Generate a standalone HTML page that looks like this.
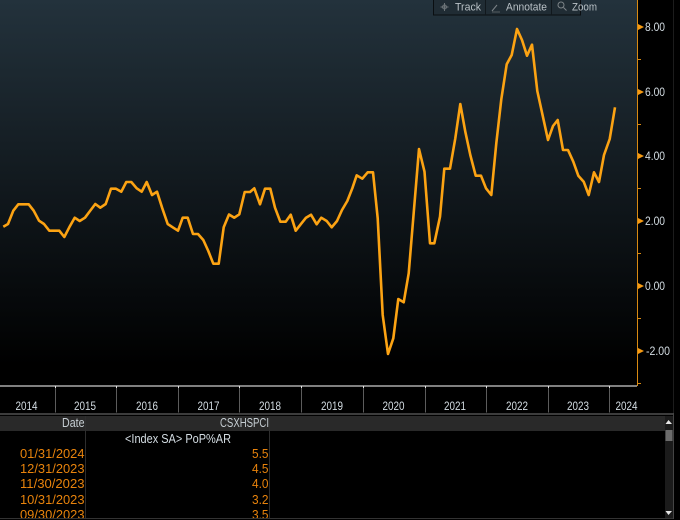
<!DOCTYPE html>
<html lang="en">
<head>
<meta charset="utf-8">
<title>CSXHSPCI chart</title>
<style>
html,body{margin:0;padding:0;background:#000;}
body{width:680px;height:520px;overflow:hidden;}
svg{display:block;}
text{font-family:"Liberation Sans",sans-serif;}
</style>
</head>
<body>
<svg width="680" height="520" viewBox="0 0 680 520" xmlns="http://www.w3.org/2000/svg">
<defs>
<linearGradient id="bg" x1="0" y1="0" x2="0" y2="1">
<stop offset="0" stop-color="#23323c"/>
<stop offset="0.95" stop-color="#000"/>
<stop offset="1" stop-color="#000"/>
</linearGradient>
</defs>
<rect width="680" height="520" fill="#000"/>
<rect x="0" y="0" width="637" height="385" fill="url(#bg)"/>

<!-- toolbar -->
<rect x="433.500" y="-2" width="147" height="17" fill="#202c34" stroke="#0a0e11"/>
<path d="M485.500 0V15M551.500 0V15" stroke="#11181d"/>
<path d="M444.500 3V11M440.500 7H448.500" stroke="#6d7478" stroke-width="1"/>
<circle cx="444.500" cy="7" r="2" fill="none" stroke="#6d7478"/>
<path d="M492 11L497 5" stroke="#7d8488"/><path d="M492 12H500" stroke="#555c60"/>
<circle cx="561" cy="5" r="3" fill="none" stroke="#7d8488"/><path d="M563.500 7.500L566.500 10.500" stroke="#7d8488"/>
<g font-size="11" fill="#b9c1c6" lengthAdjust="spacingAndGlyphs">
<text x="455" y="10.500" textLength="26" lengthAdjust="spacingAndGlyphs">Track</text>
<text x="506" y="10.500" textLength="41" lengthAdjust="spacingAndGlyphs">Annotate</text>
<text x="572" y="10.500" textLength="25" lengthAdjust="spacingAndGlyphs">Zoom</text>
</g>

<!-- series -->
<polyline fill="none" stroke="#fca313" stroke-width="2.6" stroke-linejoin="round" stroke-linecap="butt" points="3.300,226.700 8,224 13.300,210.700 18.300,204.300 23.300,204.300 28.700,204.300 33.700,210.700 39,220.700 44,224 49.300,230.700 54.300,230.700 59.300,230.700 64.300,237 69.300,227.300 74.700,217.700 79.700,221 85,217.700 90,211 95.300,204 100.300,207.700 105.700,204 111,188.700 116,188.700 121.300,191.700 126.300,182 131.300,182 136.700,188.300 141.700,191.700 146.700,182 152,195 157,191.700 162.300,208.300 167.700,224 172.700,227.300 178,230.700 182.700,217.700 187.700,217.700 193,234 198,234 203.300,240 208.300,251 213.300,263.700 218.700,263.700 223.700,227.300 229,214.500 234.300,217.700 239.300,214.300 244.700,192 250,192 254.300,188.300 260,204.300 265,188.700 270.300,188.700 275,207.700 280.300,221.700 285.700,221.700 290.700,214.700 295.700,230.700 300.700,224.300 306,217.700 311,214.700 316.700,224.300 321.300,217.700 326.700,221 331.700,227.300 337,221 342,210 347.300,201 352.300,188.300 356.700,175.300 362.300,178.700 367.700,172.300 373,172.300 377.700,218.300 382.700,315 388,354 393.300,338.300 398.300,299 403.700,302.300 408.700,273.300 413.800,211.700 419,149 424.500,171.700 430,243.300 434.300,243.300 440,216.700 444.300,168.700 450,168.700 455.300,138.300 460.300,104 465.300,131.700 470.300,155 475.700,175.700 481,175.700 486,188.300 491.300,195 496.300,143.300 501.300,99.300 506.700,64.300 511.700,55 517,29 522,40 527,55.700 532,44.700 537.300,91 542.700,115.700 548,140 553,126 557.700,120 563,150 568,150 573.300,161.700 578.300,175.700 583.700,181.700 588.700,195 594,172.300 599,182 604,155 609.700,139 615,107.300"/>

<!-- y axis -->
<path d="M637.500 0V386" stroke="#d98a12" stroke-width="1"/>
<g fill="#f59a12">
<path d="M638 24L644 27 638 30Z"/>
<path d="M638 89L644 92 638 95Z"/>
<path d="M638 153L644 156 638 159Z"/>
<path d="M638 218L644 221 638 224Z"/>
<path d="M638 283L644 286 638 289Z"/>
<path d="M638 348L644 351 638 354Z"/>
</g>
<path d="M638 59.500H641M638 124.500H641M638 188.500H641M638 253.500H641M638 318.500H641M638 383.500H641" stroke="#d98a12"/>
<g font-size="11.500" fill="#d4dde3">
<text x="645" y="31" textLength="20" lengthAdjust="spacingAndGlyphs">8.00</text>
<text x="645" y="96" textLength="20" lengthAdjust="spacingAndGlyphs">6.00</text>
<text x="645" y="160" textLength="20" lengthAdjust="spacingAndGlyphs">4.00</text>
<text x="645" y="225" textLength="20" lengthAdjust="spacingAndGlyphs">2.00</text>
<text x="645" y="290" textLength="20" lengthAdjust="spacingAndGlyphs">0.00</text>
<text x="646" y="355" textLength="24" lengthAdjust="spacingAndGlyphs">-2.00</text>
</g>

<!-- x axis -->
<rect x="0" y="385" width="637" height="2" fill="#808080"/>
<path d="M55.500 387V412.500M116.500 387V412.500M178.500 387V412.500M239.500 387V412.500M301.500 387V412.500M363.500 387V412.500M425.500 387V412.500M486.500 387V412.500M548.500 387V412.500M609.500 387V412.500" stroke="#5c5c5c"/>
<path d="M55.500 386V388M116.500 386V388M178.500 386V388M239.500 386V388M301.500 386V388M363.500 386V388M425.500 386V388M486.500 386V388M548.500 386V388M609.500 386V388" stroke="#e4e4e4"/>
<g font-size="11.500" fill="#d4dde3">
<text x="15.500" y="410" textLength="22" lengthAdjust="spacingAndGlyphs">2014</text>
<text x="74" y="410" textLength="22" lengthAdjust="spacingAndGlyphs">2015</text>
<text x="136" y="410" textLength="22" lengthAdjust="spacingAndGlyphs">2016</text>
<text x="197.500" y="410" textLength="22" lengthAdjust="spacingAndGlyphs">2017</text>
<text x="259" y="410" textLength="22" lengthAdjust="spacingAndGlyphs">2018</text>
<text x="321" y="410" textLength="22" lengthAdjust="spacingAndGlyphs">2019</text>
<text x="382.500" y="410" textLength="22" lengthAdjust="spacingAndGlyphs">2020</text>
<text x="444" y="410" textLength="22" lengthAdjust="spacingAndGlyphs">2021</text>
<text x="506" y="410" textLength="22" lengthAdjust="spacingAndGlyphs">2022</text>
<text x="567" y="410" textLength="22" lengthAdjust="spacingAndGlyphs">2023</text>
<text x="615.500" y="410" textLength="22" lengthAdjust="spacingAndGlyphs">2024</text>
</g>

<!-- table frame -->
<rect x="0" y="413" width="673" height="2" fill="#3c3c3c"/>
<rect x="0" y="416" width="665" height="15" fill="#292929"/>
<path d="M85.500 416V520M269.500 416V520" stroke="#2e2e2e"/>
<rect x="673" y="0" width="1" height="413" fill="#1c1c1c"/>
<rect x="673" y="413" width="1" height="106" fill="#444"/>

<!-- scrollbar -->
<rect x="665" y="416" width="8" height="102" fill="#1b1b1b"/>
<rect x="665.500" y="430" width="7" height="11" fill="#6c6c6c"/>
<path d="M668.500 420L665.500 424H672Z" fill="#e4e4e4"/>
<path d="M668.500 515L665.500 511H672Z" fill="#e4e4e4"/>

<!-- table text -->
<g font-size="13" fill="#c6ced3">
<text x="62" y="427" textLength="22.500" lengthAdjust="spacingAndGlyphs">Date</text>
<text x="220" y="427" textLength="49" lengthAdjust="spacingAndGlyphs">CSXHSPCI</text>
</g>
<text x="125" y="443" font-size="13" fill="#d4dde3" textLength="106" lengthAdjust="spacingAndGlyphs">&lt;Index SA&gt; PoP%AR</text>
<g font-size="13" fill="#e8830c">
<text x="20" y="458" textLength="64.500" lengthAdjust="spacingAndGlyphs">01/31/2024</text>
<text x="20" y="473" textLength="64.500" lengthAdjust="spacingAndGlyphs">12/31/2023</text>
<text x="20" y="488" textLength="64.500" lengthAdjust="spacingAndGlyphs">11/30/2023</text>
<text x="20" y="504" textLength="64.500" lengthAdjust="spacingAndGlyphs">10/31/2023</text>
<text x="20" y="519" textLength="64.500" lengthAdjust="spacingAndGlyphs">09/30/2023</text>
<text x="252" y="458" textLength="16.500" lengthAdjust="spacingAndGlyphs">5.5</text>
<text x="252" y="473" textLength="16.500" lengthAdjust="spacingAndGlyphs">4.5</text>
<text x="252" y="488" textLength="16.500" lengthAdjust="spacingAndGlyphs">4.0</text>
<text x="252" y="504" textLength="16.500" lengthAdjust="spacingAndGlyphs">3.2</text>
<text x="252" y="519" textLength="16.500" lengthAdjust="spacingAndGlyphs">3.5</text>
</g>
<rect x="0" y="518" width="673" height="2" fill="#000"/>
<rect x="0" y="518" width="673" height="1" fill="#333"/>
</svg>
</body>
</html>
